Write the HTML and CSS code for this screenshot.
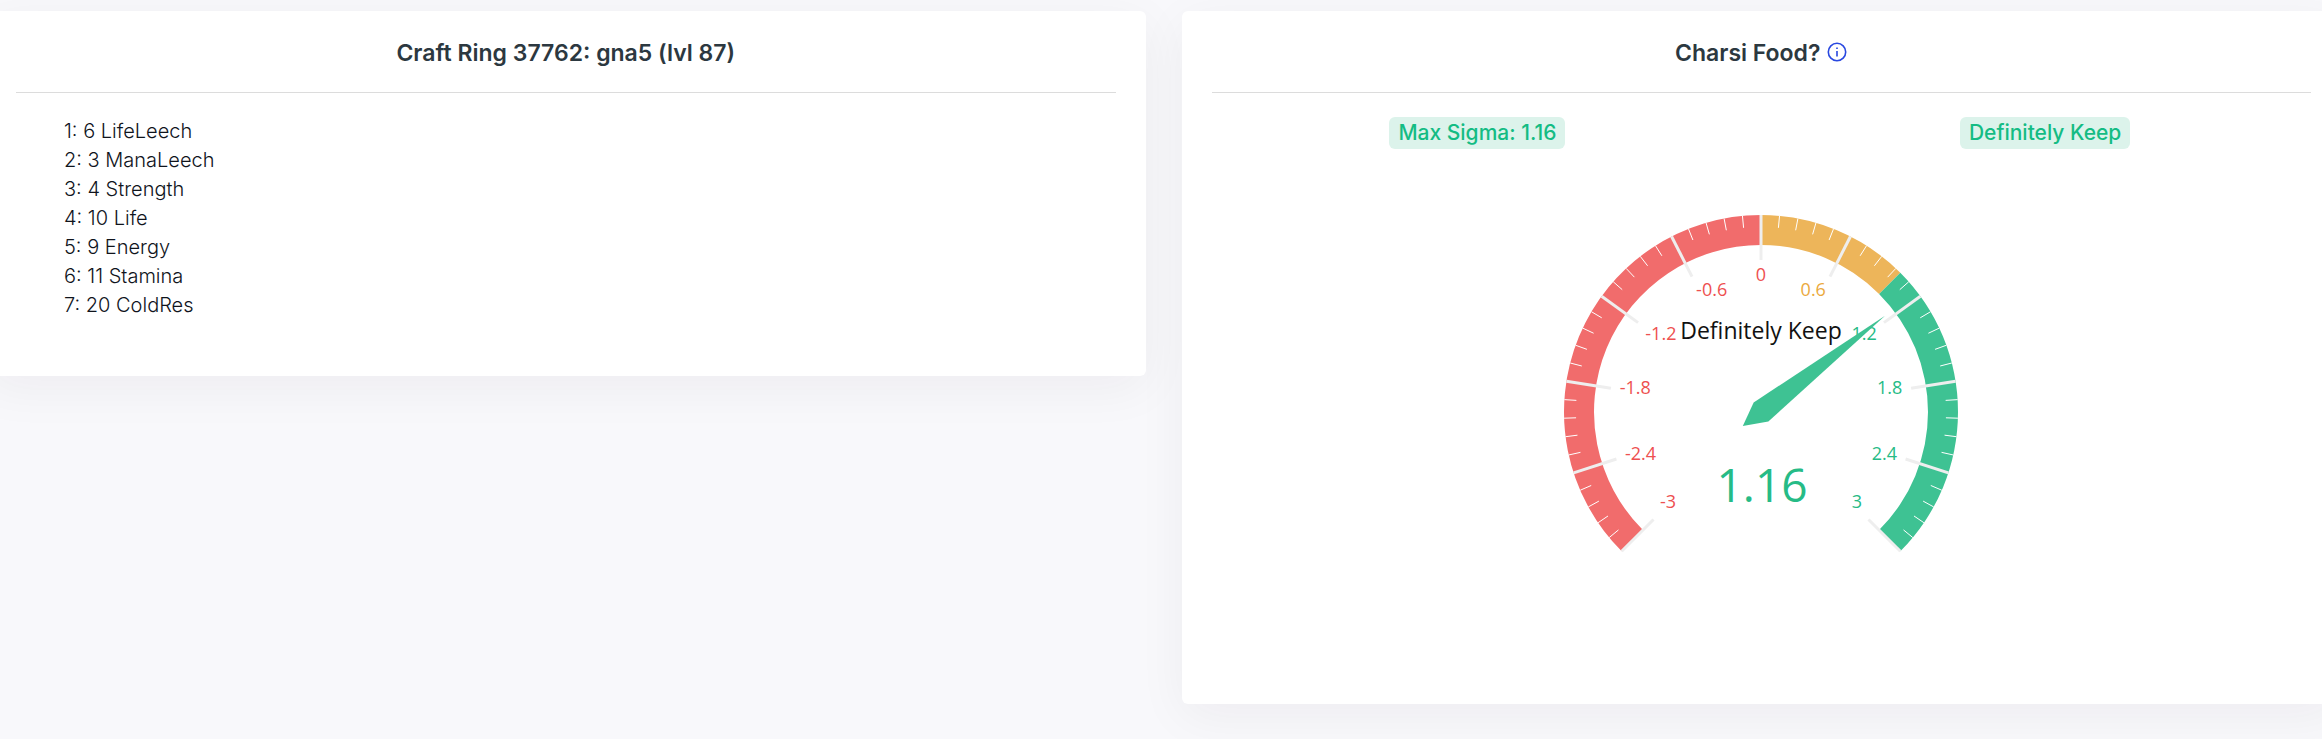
FILE: index.html
```html
<!DOCTYPE html>
<html lang="en">
<head>
    <meta charset="UTF-8">
    <meta name="viewport" content="width=device-width, initial-scale=1.0">
    <title>Craft Ring 37762</title>
    <link rel="stylesheet" href="styles.css">
</head>
<body>
    <main class="cards">
        <section class="card">
            <div class="card_header">
                <h2>Craft Ring 37762: gna5 (lvl 87)</h2>
            </div>
            <ul class="stats">
                <li>1: 6 LifeLeech</li>
                <li>2: 3 ManaLeech</li>
                <li>3: 4 Strength</li>
                <li>4: 10 Life</li>
                <li>5: 9 Energy</li>
                <li>6: 11 Stamina</li>
                <li>7: 20 ColdRes</li>
            </ul>
        </section>

        <section class="card">
            <div class="card_header">
                <h2>Charsi Food?</h2>
                <button class="infoBtn" type="button" aria-label="About this rating">
                    <svg viewBox="0 0 20 20" width="20" height="20">
                        <circle cx="10" cy="10" r="8.7" />
                        <path d="M10 9v5.5M10 5.5v1.6" />
                    </svg>
                </button>
            </div>
            <div class="badges">
                <div><span class="badge">Max Sigma: 1.16</span></div>
                <div><span class="badge">Definitely Keep</span></div>
            </div>
            <div class="gauge_wrapper">
                <svg id="gauge" class="gauge" viewBox="-200 -200 400 370" width="400" height="370" role="img" aria-label="Sigma 1.16">
                    <g id="bands"></g>
                    <g id="ticks"></g>
                    <g id="labels"></g>
                    <text class="gauge_title" x="0" y="-73">Definitely Keep</text>
                    <path id="needle" class="green" d="M0 -157L12 0L0 23L-12 0Z" />
                    <text class="gauge_value green" x="1" y="90">1.16</text>
                </svg>
            </div>
        </section>
    </main>

    <script>
        const value = 1.16;
        const min = -3;
        const max = 3;
        const outer = 197;
        const inner = 167;
        const svgNS = 'http://www.w3.org/2000/svg';

        // Angle in degrees, clockwise from the top
        function angleOf(v) {
            return ((v - min) / (max - min)) * 270 - 135;
        }

        function point(deg, r) {
            const a = deg * Math.PI / 180;
            return [Math.sin(a) * r, -Math.cos(a) * r];
        }

        function add(parentId, tag, attrs) {
            const el = document.createElementNS(svgNS, tag);
            for (const key in attrs) {
                el.setAttribute(key, attrs[key]);
            }
            document.getElementById(parentId).appendChild(el);
            return el;
        }

        function colorOf(v) {
            if (v <= 0) return 'red';
            return v <= 1 ? 'orange' : 'green';
        }

        // Coloured bands
        [[-3, 0, 'red'], [0, 1, 'orange'], [1, 3, 'green']].forEach(([from, to, color]) => {
            const a = angleOf(from);
            const b = angleOf(to);
            const large = b - a > 180 ? 1 : 0;
            add('bands', 'path', {
                class: color,
                d: `M${point(a, outer)}A${outer} ${outer} 0 ${large} 1 ${point(b, outer)}` +
                    `L${point(b, inner)}A${inner} ${inner} 0 ${large} 0 ${point(a, inner)}Z`
            });
        });

        // Ticks, every fifth one is long and has a label
        for (let i = 0; i <= 50; i++) {
            const major = i % 5 === 0;
            const deg = -135 + i * 5.4;
            const [x1, y1] = point(deg, outer);
            const [x2, y2] = point(deg, major ? outer - 45 : outer - 12);
            add('ticks', 'line', { class: major ? 'major' : 'minor', x1, y1, x2, y2 });

            if (major) {
                const v = Math.round((min + i * 0.12) * 10) / 10;
                const [ux, uy] = point(deg, 1);
                const anchor = ux < -0.4 ? 'start' : ux > 0.4 ? 'end' : 'middle';
                const shift = uy < -0.4 ? 11 : uy > 0.4 ? -4 : 4;
                const label = add('labels', 'text', {
                    class: colorOf(v),
                    x: ux * 143,
                    y: uy * 142 + shift,
                    'text-anchor': anchor
                });
                label.textContent = v;
            }
        }

        document.getElementById('needle').setAttribute('transform', `rotate(${angleOf(value)})`);
    </script>
</body>
</html>
```
FILE: styles.css
```css
* {
    box-sizing: border-box;
}

body {
    margin: 0;
    font-family: Inter, sans-serif;
    background-color: #f8f8fb;
    color: #10141c;
    overflow-x: hidden;
}

.cards {
    display: grid;
    grid-template-columns: 1fr 1fr;
    align-items: start;
    gap: 36px;
    margin: 11px -19px 35px -14px;
}

.card {
    padding: 0 30px;
    background: #fff;
    border-radius: 6px;
    box-shadow: 0 12px 50px rgba(30, 20, 40, 0.05);
}

.card_header {
    display: flex;
    align-items: center;
    justify-content: center;
    gap: 7px;
    height: 82px;
    border-bottom: 1px solid #dcdcdc;
}

h2 {
    margin: 0;
    padding-top: 3px;
    font-size: 23px;
    font-weight: 600;
    line-height: 32px;
    color: #2c3840;
}

.infoBtn {
    display: flex;
    padding: 0;
    border: none;
    background: none;
    cursor: pointer;
}

.infoBtn svg {
    fill: none;
    stroke: #2948e0;
    stroke-width: 1.6;
}

.stats {
    margin: 0;
    padding: 24px 48px 56px;
    list-style: none;
    font-size: 20px;
    font-weight: 300;
    line-height: 29px;
}

.badges {
    display: grid;
    grid-template-columns: 1fr 1fr;
    margin: 24px -18px 0;
    text-align: center;
}

.badge {
    display: inline-block;
    padding: 0 9px;
    border-radius: 6px;
    background: #dcf3eb;
    color: #14bc84;
    font-size: 21px;
    font-weight: 500;
    line-height: 32px;
}

.gauge_wrapper {
    display: flex;
    justify-content: center;
    padding: 63px 0 122px;
}

.gauge {
    font-family: "Open Sans", sans-serif;
    font-size: 18px;
}

.red {
    fill: #f16c6c;
}

.orange {
    fill: #edb55a;
}

.green {
    fill: #3ec293;
}

text.red {
    fill: #ee5050;
}

text.orange {
    fill: #eba93e;
}

text.green {
    fill: #26bb86;
}

.major {
    stroke: #eee;
    stroke-width: 3;
}

.minor {
    stroke: #fff;
    stroke-width: 1;
}

.gauge_title {
    font-size: 23px;
    fill: #111;
    text-anchor: middle;
}

.gauge_value {
    font-size: 46px;
    text-anchor: middle;
}
```
